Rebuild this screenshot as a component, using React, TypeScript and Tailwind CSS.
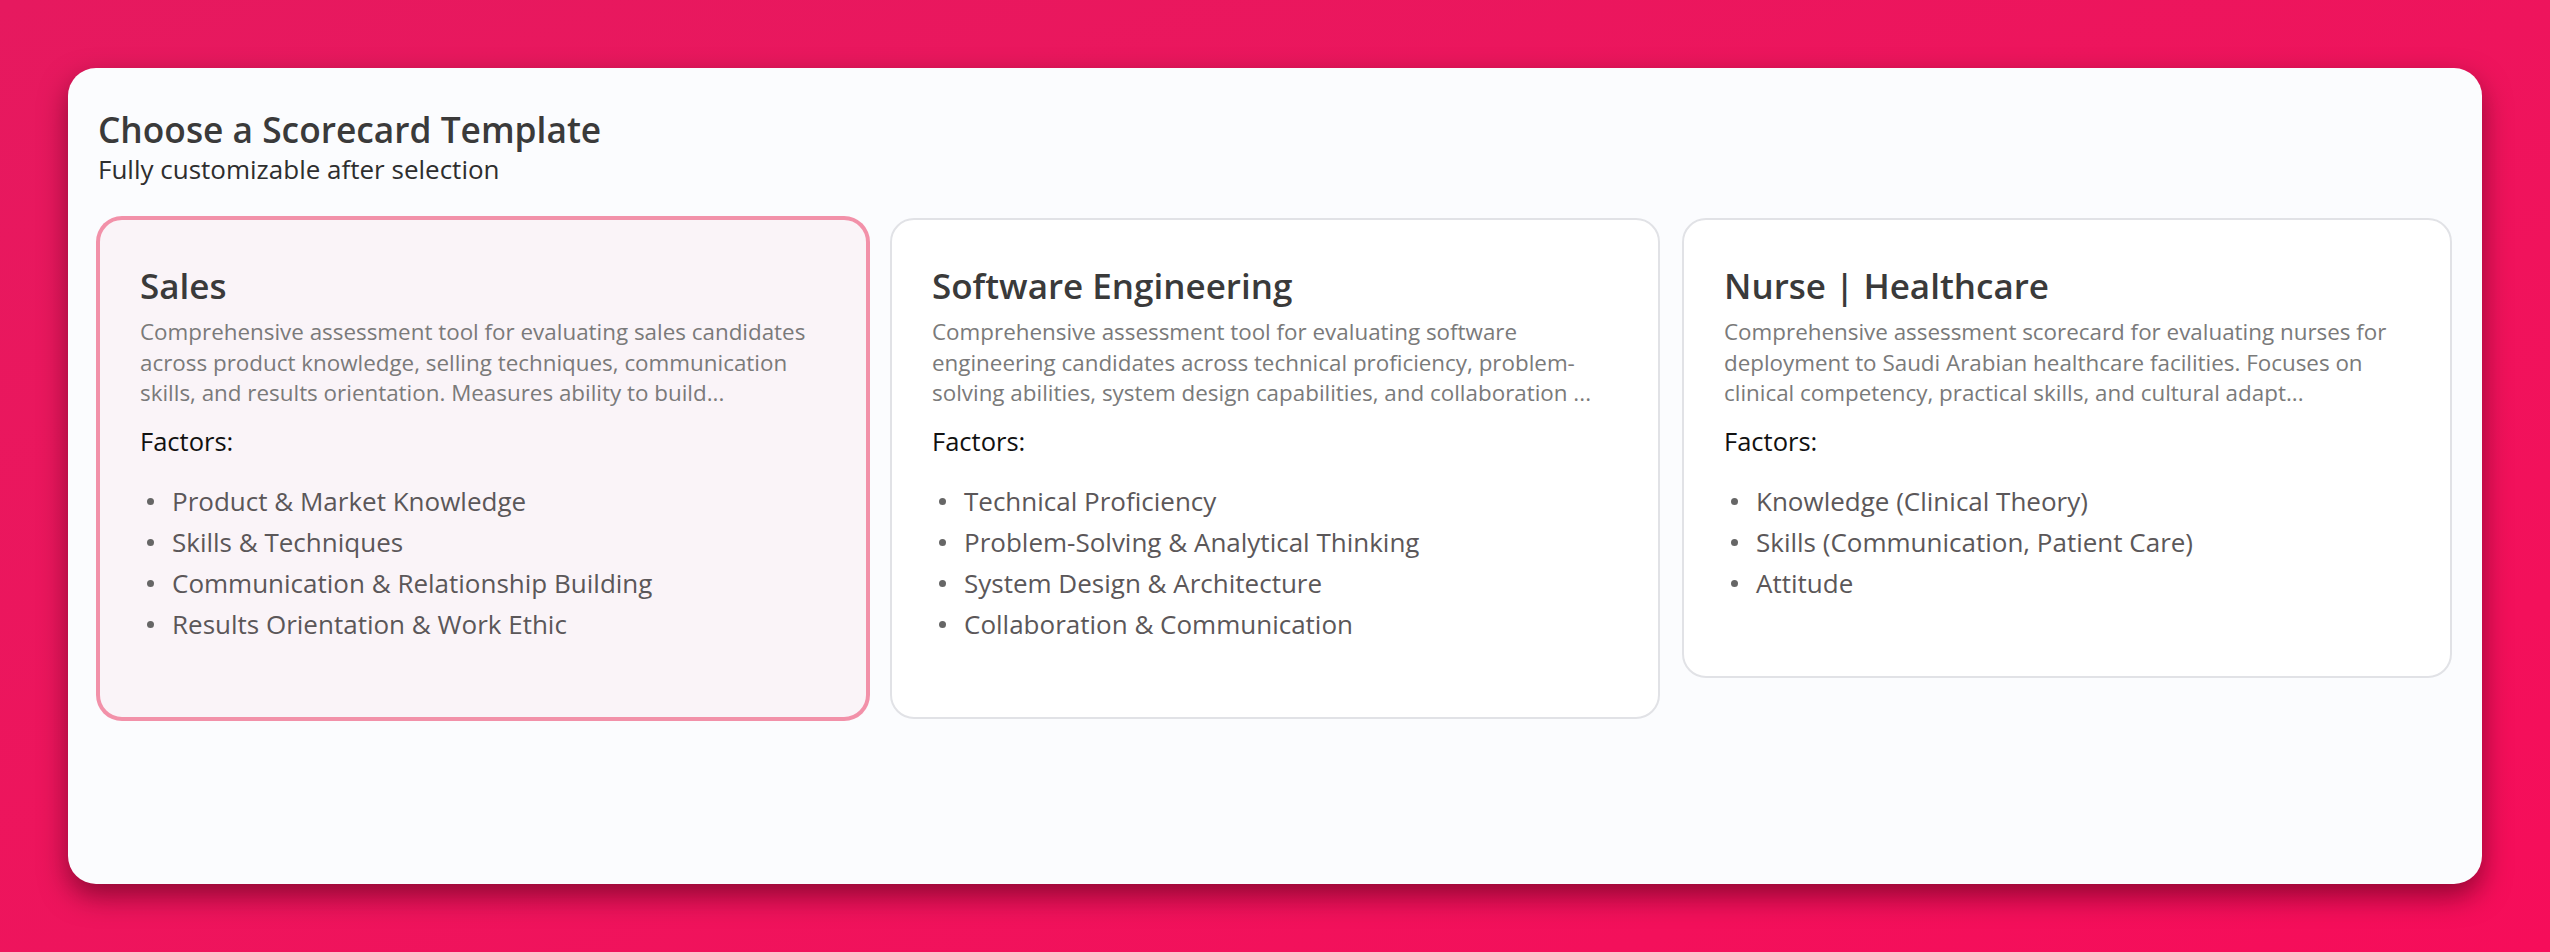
import React from "react";

type Template = {
    title: string;
    description: string;
    factors: string[];
};

const templates: Template[] = [
    {
        title: "Sales",
        description:
            "Comprehensive assessment tool for evaluating sales candidates across product knowledge, selling techniques, communication skills, and results orientation. Measures ability to build...",
        factors: [
            "Product & Market Knowledge",
            "Skills & Techniques",
            "Communication & Relationship Building",
            "Results Orientation & Work Ethic",
        ],
    },
    {
        title: "Software Engineering",
        description:
            "Comprehensive assessment tool for evaluating software engineering candidates across technical proficiency, problem-solving abilities, system design capabilities, and collaboration ...",
        factors: [
            "Technical Proficiency",
            "Problem-Solving & Analytical Thinking",
            "System Design & Architecture",
            "Collaboration & Communication",
        ],
    },
    {
        title: "Nurse | Healthcare",
        description:
            "Comprehensive assessment scorecard for evaluating nurses for deployment to Saudi Arabian healthcare facilities. Focuses on clinical competency, practical skills, and cultural adapt...",
        factors: [
            "Knowledge (Clinical Theory)",
            "Skills (Communication, Patient Care)",
            "Attitude",
        ],
    },
];

function TemplateCard({ template, selected }: { template: Template; selected: boolean }) {
    return (
        <div
            className={
                selected
                    ? "rounded-[24px] border-2 border-[#f291a9] bg-[#faf4f8] p-[40px] pb-[72px] ring-2 ring-[#f291a9]"
                    : "rounded-[24px] border-2 border-[#e1e2e6] bg-white p-[40px] pb-[72px]"
            }
        >
            <h3 className="text-[35px] leading-[51px] font-semibold text-[#3a3a3a]">{template.title}</h3>
            <p className="mt-[6px] text-[22.4px] leading-[30.5px] text-[#7a7a7a]">{template.description}</p>
            <div className="mt-[13.5px] text-[25.5px] leading-[39px] text-[#111111]">Factors:</div>
            <ul className="mt-[20px]">
                {template.factors.map((factor) => (
                    <li key={factor} className="flex items-center text-[26px] leading-[41px] text-[#5b5759]">
                        <span className="ml-[7px] mr-[18px] h-[7px] w-[7px] shrink-0 rounded-full bg-[#666666]" />
                        <span>{factor}</span>
                    </li>
                ))}
            </ul>
        </div>
    );
}

export default function App() {
    return (
        <div
            className="h-[952px] w-full overflow-hidden bg-gradient-to-br from-[#e6195f] to-[#f60d5a] px-[68px] pt-[68px]"
            style={{ fontFamily: '"Open Sans", "Noto Sans", sans-serif' }}
        >
            <div className="h-[816px] rounded-[28px] bg-[#fbfcfe] px-[30px] pt-[38px] shadow-[0_12px_28px_rgba(80,0,25,0.6)]">
                {/* Header */}
                <h2 className="text-[35.3px] leading-[46px] font-semibold text-[#3a3a3a]">Choose a Scorecard Template</h2>
                <p className="text-[26px] leading-[34px] text-[#2e2e2e]">Fully customizable after selection</p>

                {/* Template grid */}
                <div className="mt-[32px] grid grid-cols-3 items-start gap-[22px]">
                    {templates.map((t, i) => (
                        <TemplateCard key={t.title} template={t} selected={i === 0} />
                    ))}
                </div>
            </div>
        </div>
    );
}
